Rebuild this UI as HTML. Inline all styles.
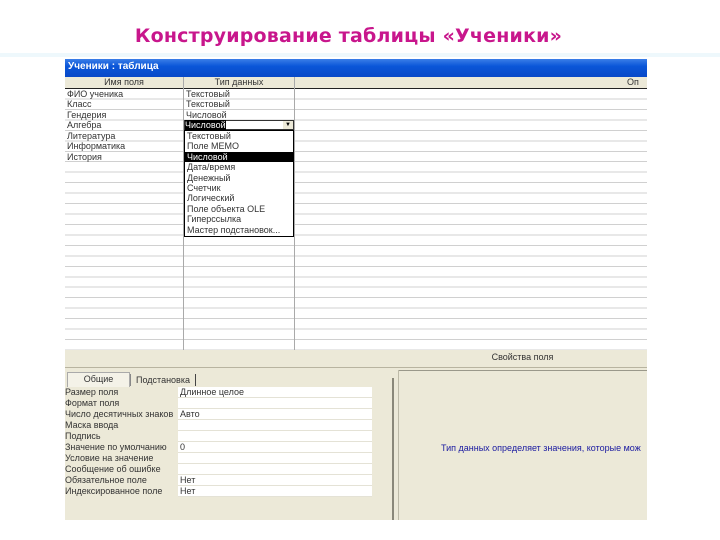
<!DOCTYPE html>
<html><head><meta charset="utf-8"><style>
body{margin:0;width:720px;height:540px;background:#fff;position:relative;overflow:hidden;font-family:"Liberation Sans","DejaVu Sans",sans-serif}
.a{position:absolute}
.t{font-size:9px;line-height:10.46px;color:#333;white-space:nowrap}
</style></head><body>
<div class="a" style="left:122px;top:25px;width:453px;text-align:center;font-size:19px;font-weight:bold;color:#c8168c;letter-spacing:0.2px;font-family:'DejaVu Sans',sans-serif">Конструирование таблицы «Ученики»</div>
<div class="a" style="left:0;top:53px;width:720px;height:4px;background:#eef8fc"></div>
<div class="a" style="left:65px;top:59px;width:582px;height:18px;background:linear-gradient(#3a7ee8,#0a56d8 40%,#0848c8);"></div>
<div class="a" style="left:68px;top:61px;font-size:10px;font-weight:bold;color:#fff">Ученики : таблица</div>
<div class="a" style="left:65px;top:77px;width:582px;height:11px;background:#ece9d8;border-bottom:1px solid #222"></div>
<div class="a t" style="left:65px;top:77px;width:118px;text-align:center">Имя поля</div>
<div class="a t" style="left:184px;top:77px;width:110px;text-align:center">Тип данных</div>
<div class="a t" style="left:627px;top:77px">Оп</div>
<div class="a" style="left:65px;top:89px;width:582px;height:261px;background:repeating-linear-gradient(#fff 0,#fff 9.46px,#d0d0d0 9.46px,#d0d0d0 10.46px)"></div>
<div class="a" style="left:183px;top:77px;width:1px;height:273px;background:#aaa"></div>
<div class="a" style="left:294px;top:77px;width:1px;height:273px;background:#aaa"></div>
<div class="a t" style="left:67px;top:89px">ФИО ученика<br>Класс<br>Гендерия<br>Алгебра<br>Литература<br>Информатика<br>История</div>
<div class="a t" style="left:186px;top:89px">Текстовый<br>Текстовый<br>Числовой</div>
<div class="a" style="left:184px;top:120px;width:110px;height:10px;background:#fff;border:1px solid #333;box-sizing:border-box"></div>
<div class="a t" style="left:185px;top:120px;background:#000;color:#fff;line-height:10px">Числовой</div>
<div class="a" style="left:283px;top:121px;width:10px;height:8px;background:#ece9d8;font-size:6px;text-align:center;line-height:8px">▼</div>
<div class="a" style="left:184px;top:130px;width:110px;height:107px;background:#fff;border:1px solid #000;box-sizing:border-box"></div>
<div class="a" style="left:185px;top:152px;width:108px;height:10px;background:#000"></div>
<div class="a t" style="left:187px;top:131px;line-height:10.4px">Текстовый<br>Поле МЕМО<br><span style="color:#fff">Числовой</span><br>Дата/время<br>Денежный<br>Счетчик<br>Логический<br>Поле объекта OLE<br>Гиперссылка<br>Мастер подстановок...</div>
<div class="a" style="left:65px;top:350px;width:582px;height:170px;background:#ece9d8"></div>
<div class="a t" style="left:398px;top:352px;width:249px;text-align:center">Свойства поля</div>
<div class="a" style="left:65px;top:367px;width:582px;height:1px;background:#b8b4a0"></div>
<div class="a" style="left:67px;top:372px;width:61px;height:14px;border:1px solid #aaa;border-bottom:none;background:#f4f2e8;font-size:9px;text-align:center;line-height:13px;color:#333">Общие</div>
<div class="a" style="left:130px;top:374px;width:64px;height:12px;border-left:1px solid #888;border-right:1px solid #444;font-size:9px;text-align:center;line-height:12px;color:#333">Подстановка</div>
<div class="a t" style="left:65px;top:387px;line-height:11px">Размер поля<br>Формат поля<br>Число десятичных знаков<br>Маска ввода<br>Подпись<br>Значение по умолчанию<br>Условие на значение<br>Сообщение об ошибке<br>Обязательное поле<br>Индексированное поле</div>
<div class="a" style="left:178px;top:387px;width:194px;height:110px;background:repeating-linear-gradient(#fff 0,#fff 10px,#e4e2d6 10px,#e4e2d6 11px)"></div>
<div class="a t" style="left:180px;top:387px;line-height:11px">Длинное целое<br>&nbsp;<br>Авто<br>&nbsp;<br>&nbsp;<br>0<br>&nbsp;<br>&nbsp;<br>Нет<br>Нет</div>
<div class="a" style="left:392px;top:378px;width:2px;height:142px;background:#8a887a"></div>
<div class="a" style="left:398px;top:370px;width:249px;height:1px;background:#9a988a"></div>
<div class="a" style="left:398px;top:370px;width:1px;height:150px;background:#bdbaa8"></div>
<div class="a t" style="left:441px;top:443px;color:#1a1aa0">Тип данных определяет значения, которые мож</div>
</body></html>
